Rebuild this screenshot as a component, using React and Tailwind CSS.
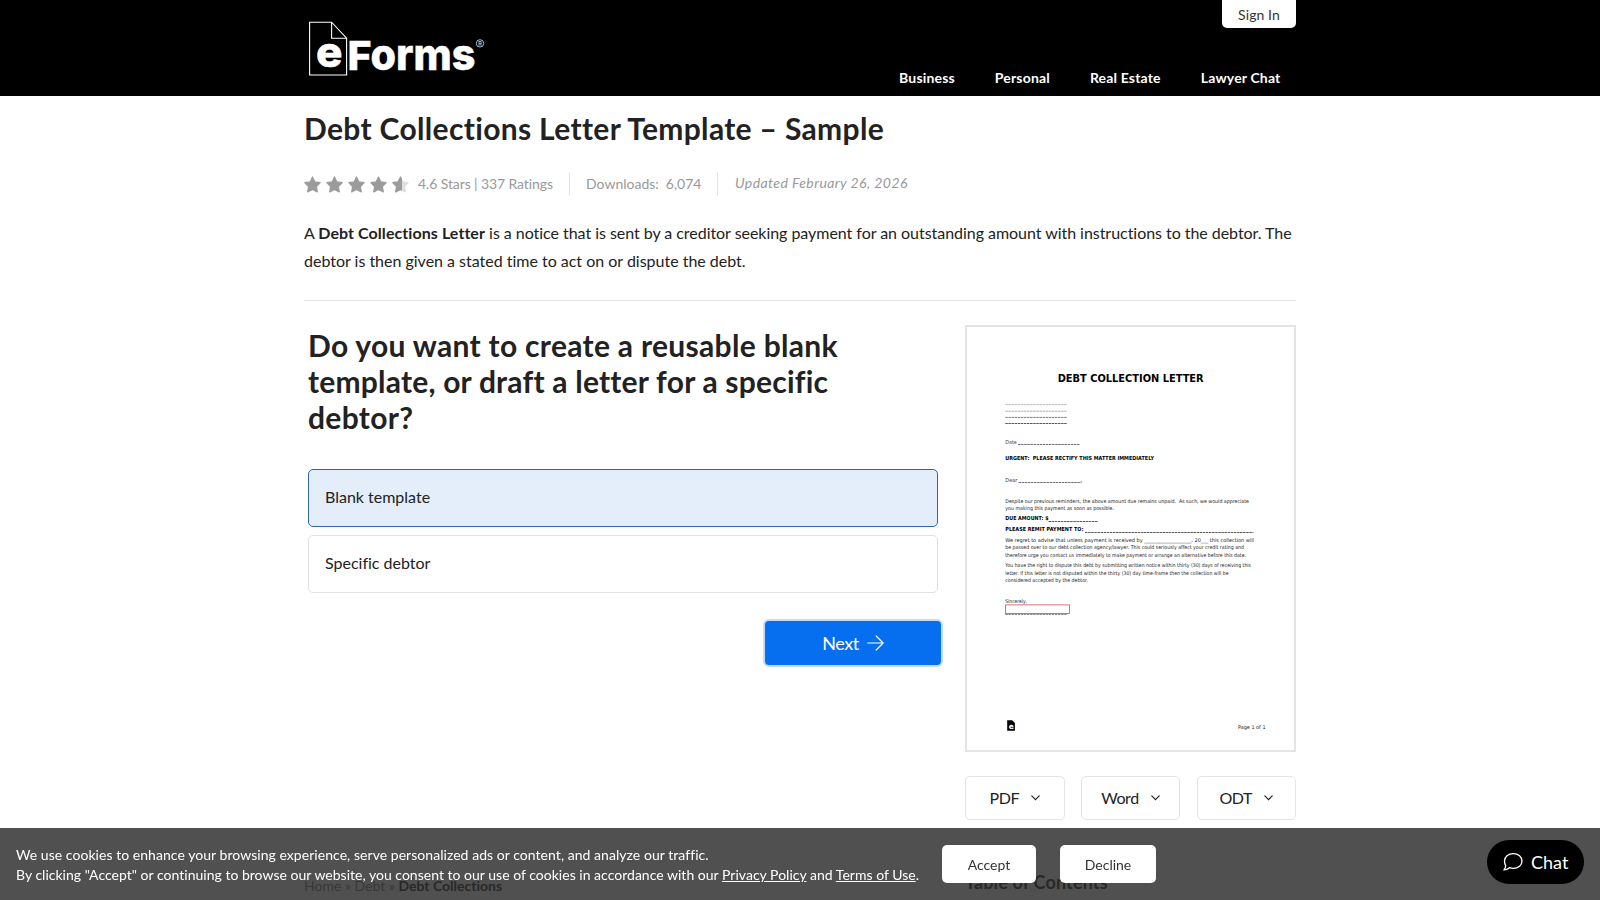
import React from "react";

const navLinks = ["Business", "Personal", "Real Estate", "Lawyer Chat"];
const formats = ["PDF", "Word", "ODT"];

// text rows of the letter preview: [text, baseline, right edge, bold]
const letterRows = [
  ["URGENT:  PLEASE RECTIFY THIS MATTER IMMEDIATELY", 460.3, 1154, true],
  ["Despite our previous reminders, the above amount due remains unpaid.  As such, we would appreciate", 502.9, 1249, false],
  ["you making this payment as soon as possible.", 510.2, 1114, false],
  ["DUE AMOUNT: $", 520.4, 1048.5, true],
  ["PLEASE REMIT PAYMENT TO:", 531.1, 1083.5, true],
  ["We regret to advise that unless payment is received by ___________________, 20___ this collection will", 541.9, 1254, false],
  ["be passed over to our debt collection agency/lawyer. This could seriously affect your credit rating and", 549.3, 1244, false],
  ["therefore urge you contact us immediately to make payment or arrange an alternative before this date.", 556.6, 1246, false],
  ["You have the right to dispute this debt by submitting written notice within thirty (30) days of receiving this", 567.3, 1251, false],
  ["letter. If this letter is not disputed within the thirty (30) day time-frame then the collection will be", 574.9, 1228.5, false],
  ["considered accepted by the debtor.", 582.2, 1088, false],
  ["Sincerely,", 603.2, 1027, false],
];

// blanks to fill in: [x1, x2, y, colour]
const blanks = [
  [1005.3, 1067.3, 404.7, "#999"],
  [1005.3, 1067.3, 411.2, "#888"],
  [1005.3, 1067.3, 417.4, "#444"],
  [1005.3, 1067.3, 423.5, "#111"],
  [1018, 1080, 444.5, "#333"],
  [1018.5, 1081, 482.5, "#333"],
  [1048.5, 1098, 521.5, "#111"],
  [1085, 1253.5, 532.5, "#111"],
  [1005.3, 1067.3, 614.3, "#333"],
];

function Logo() {
  return (
    <svg className="ml-[5px] mt-[21px] h-[56px] w-[180px] overflow-visible" viewBox="309 21 180 56">
      <path
        d="M309.6 22.2H331.6L346.6 38.2V75H309.6ZM331.6 22.2V38.2H346.6"
        fill="none"
        stroke="#fff"
        strokeWidth="1.1"
      />
      <g fill="#fff" stroke="#fff" strokeWidth="0.5" fontFamily="Inter, sans-serif" fontWeight="800">
        <text x="316" y="66.8" fontSize="42" textLength="26.5" lengthAdjust="spacingAndGlyphs">e</text>
        <text x="347.6" y="70" fontSize="40" textLength="24" lengthAdjust="spacingAndGlyphs">F</text>
        <text x="370.4" y="70" fontSize="43" textLength="105" lengthAdjust="spacingAndGlyphs">orms</text>
      </g>
      <circle cx="480" cy="43.4" r="3.7" fill="none" stroke="#fff" strokeWidth="0.7" />
      <text x="480" y="45.5" fill="#fff" fontSize="5.5" textAnchor="middle" fontFamily="Inter, sans-serif">R</text>
    </svg>
  );
}

function Star({ partial }) {
  const d = "M8.5 1l2.4 4.9 5.3.8-3.8 3.8.9 5.4-4.8-2.5-4.8 2.5.9-5.4L.8 6.7l5.3-.8z";
  const main = "#9b9b9b";
  const base = partial ? "#dedede" : main;
  return (
    <svg className="h-[17px] w-[17px]" viewBox="0 0 17 17" strokeLinejoin="round" strokeWidth="1.2">
      <clipPath id="star-part">
        <rect width="10" height="17" />
      </clipPath>
      <path d={d} fill={base} stroke={base} />
      {partial && <path d={d} fill={main} stroke={main} clipPath="url(#star-part)" />}
    </svg>
  );
}

function LetterPreview() {
  return (
    <div className="h-[427px] w-[331px] border-2 border-[#e4e4e4] bg-white">
      <svg className="block h-full w-full" viewBox="967 327 327 423" fontFamily="'DejaVu Sans', sans-serif">
        <text x="1057.7" y="382.1" fontSize="11" fontWeight="700" textLength="146" lengthAdjust="spacingAndGlyphs">
          DEBT COLLECTION LETTER
        </text>
        {blanks.map(([x1, x2, y, colour]) => (
          <line key={y} x1={x1} x2={x2} y1={y} y2={y} stroke={colour} strokeWidth="0.7" strokeDasharray="2.5 0.6" />
        ))}
        <text x="1005.3" y="443.7" fontSize="5.4" fill="#444" textLength="11.5" lengthAdjust="spacingAndGlyphs">Date</text>
        <text x="1005.3" y="481.7" fontSize="5.4" fill="#444" textLength="12" lengthAdjust="spacingAndGlyphs">Dear</text>
        <text x="1080.5" y="481.7" fontSize="5.4">,</text>
        {letterRows.map(([text, y, right, bold]) => (
          <text
            key={y}
            className="whitespace-pre"
            x="1005.3"
            y={y}
            fontSize={bold ? 5.5 : 5.2}
            fontWeight={bold ? 700 : 400}
            fill={bold ? "#000" : "#222"}
            textLength={right - 1005.3}
            lengthAdjust="spacingAndGlyphs"
          >
            {text}
          </text>
        ))}
        <rect x="1005.5" y="604.9" width="64" height="8.6" fill="none" stroke="#d8606c" strokeWidth="0.9" />
        <path d="M1007.2 720.3h5l2.7 2.7v7.7h-7.7z" fill="#000" />
        <text x="1008.7" y="729" fontSize="7.5" fontWeight="700" fill="#fff">e</text>
        <text x="1238" y="728.8" fontSize="5.2" fill="#222" textLength="27.5" lengthAdjust="spacingAndGlyphs">Page 1 of 1</text>
      </svg>
    </div>
  );
}

function Header() {
  return (
    <header className="h-24 bg-black">
      <div className="mx-auto flex h-full w-[992px] items-start justify-between">
        <Logo />
        <div className="flex h-full flex-col items-end justify-between">
          <a className="flex h-7 w-[74px] items-center justify-center rounded-b-[5px] bg-white pt-px text-sm tracking-[0.1px] text-[#333]">
            Sign In
          </a>
          <nav className="mr-[15.5px] flex gap-10 pb-2 text-sm font-bold tracking-[0.17px] text-white">
            {navLinks.map((link) => (
              <a key={link}>{link}</a>
            ))}
          </nav>
        </div>
      </div>
    </header>
  );
}

function Chevron() {
  return (
    <svg className="h-[6px] w-[9px]" viewBox="0 0 9 6" fill="none" stroke="#222" strokeWidth="1.2" strokeLinecap="round">
      <path d="M0.8 0.9L4.5 4.6L8.2 0.9" />
    </svg>
  );
}

function CookieBar() {
  return (
    <div className="fixed inset-x-0 bottom-0 flex h-[72px] items-start bg-[#292929]/82 pl-4 pt-[17px] text-sm text-white">
      <p className="w-[926px] whitespace-nowrap leading-5 tracking-[0.047px]">
        We use cookies to enhance your browsing experience, serve personalized ads or content, and analyze our traffic.
        <br />
        <span className="tracking-[0.016px]">
          By clicking "Accept" or continuing to browse our website, you consent to our use of cookies in accordance with our{" "}
          <a className="underline">Privacy Policy</a> and <a className="underline">Terms of Use</a>.
        </span>
      </p>
      <button className="h-[38px] w-[94px] rounded-[5px] bg-white pt-px text-[#333]">Accept</button>
      <button className="ml-6 h-[38px] w-24 rounded-[5px] bg-white pt-px text-[#333]">Decline</button>
    </div>
  );
}

export default function App() {
  return (
    <div className="h-[900px] overflow-hidden bg-white font-['Lato',sans-serif] text-[#222] [font-variant-ligatures:none]">
      <Header />
      <main className="mx-auto w-[992px]">
        <h1 className="pt-[14px] text-[30px] font-bold leading-9 tracking-[0.33px]">
          Debt Collections Letter Template – Sample
        </h1>
        <div className="mt-6 flex h-7 items-center whitespace-nowrap text-sm text-[#999]">
          <div className="flex gap-[5px]">
            <Star />
            <Star />
            <Star />
            <Star />
            <Star partial />
          </div>
          <span className="ml-[9px] w-[151px] tracking-[-0.1px]">4.6 Stars | 337 Ratings</span>
          <span className="flex h-6 w-[149px] items-center gap-2 border-x border-[#e4e4e4] pl-4">
            <span>Downloads:</span>
            <span className="-ml-px">6,074</span>
          </span>
          <em className="-mt-[2px] ml-[17px] tracking-[0.43px]">Updated February 26, 2026</em>
        </div>
        <p className="mt-[21px] whitespace-nowrap text-base leading-7 tracking-[-0.04px]">
          A <b className="tracking-[0.07px]">Debt Collections Letter</b> is a notice that is sent by a creditor seeking
          payment for an outstanding amount with instructions to the debtor. The
          <br />
          <span className="tracking-[-0.01px]">debtor is then given a stated time to act on or dispute the debt.</span>
        </p>
        <hr className="mt-[25px] border-[#e2e2e2]" />

        <div className="mt-6 flex items-start justify-between">
          <section className="ml-1 flex w-[633px] flex-col">
            <h2 className="mt-[2px] whitespace-nowrap text-[30px] font-bold leading-9 tracking-[0.31px]">
              Do you want to create a reusable blank
              <br />
              <span className="tracking-[0.21px]">template, or draft a letter for a specific</span>
              <br />
              debtor?
            </h2>
            <div className="mt-[34px] flex w-[630px] flex-col gap-2">
              <div className="flex h-[58px] items-center rounded-[5px] border border-[#2b68b0] bg-[#e4eefb] px-4 pb-[2px]">
                Blank template
              </div>
              <div className="flex h-[58px] items-center rounded-[5px] border border-[#e2e2e2] px-4 pb-[2px]">
                Specific debtor
              </div>
            </div>
            <button className="mt-7 flex h-11 w-44 items-center justify-center gap-2 self-end rounded-[4px] bg-[#066ff0] text-lg text-white shadow-[0_0_0_2px_#bfdcfd]">
              <span className="tracking-[-0.4px]">Next</span>
              <svg className="h-[17px] w-[17px]" viewBox="0 0 17 17" fill="none" stroke="#fff" strokeWidth="1.2" strokeLinecap="round" strokeLinejoin="round">
                <path d="M0.8 8H16M9.2 1L16.1 8L9.2 15" />
              </svg>
            </button>
          </section>

          <aside className="w-[331px]">
            <LetterPreview />
            <div className="mt-6 flex justify-between">
              {formats.map((format) => (
                <button
                  key={format}
                  className="flex h-11 w-[99.5px] items-center justify-center gap-3 rounded-[5px] border border-[#e4e4e4] pb-px text-base tracking-[-0.4px]"
                >
                  {format}
                  <Chevron />
                </button>
              ))}
            </div>
          </aside>
        </div>
      </main>

      <footer className="mt-6 border-t border-[#f0f0f0]">
        <div className="mx-auto flex w-[992px] items-start">
          <p className="mt-[31px] w-[661px] text-sm leading-5 text-[#777]">
            Home » Debt » <b className="text-[#222]">Debt Collections</b>
          </p>
          <h3 className="mt-[23px] text-lg font-bold leading-7 tracking-[0.15px]">Table of Contents</h3>
        </div>
      </footer>

      <CookieBar />
      <button className="fixed bottom-4 right-4 flex h-11 w-[97px] items-center gap-2 rounded-full bg-black pl-4 text-lg text-white">
        <svg className="h-5 w-5" viewBox="0 0 20 20" fill="none" stroke="#fff" strokeWidth="1.3" strokeLinejoin="round">
          <path d="M10.3 1.6C15.4 1.6 19 4.8 19 9S15.4 16.4 10.3 16.4C8.9 16.4 7.6 16.2 6.5 15.7C5 17 3 17.9 0.9 17.9C2 16.7 2.7 15.3 2.7 13.6C1.9 12.2 1.5 10.7 1.5 9C1.5 4.8 5.2 1.6 10.3 1.6Z" />
        </svg>
        Chat
      </button>
    </div>
  );
}
